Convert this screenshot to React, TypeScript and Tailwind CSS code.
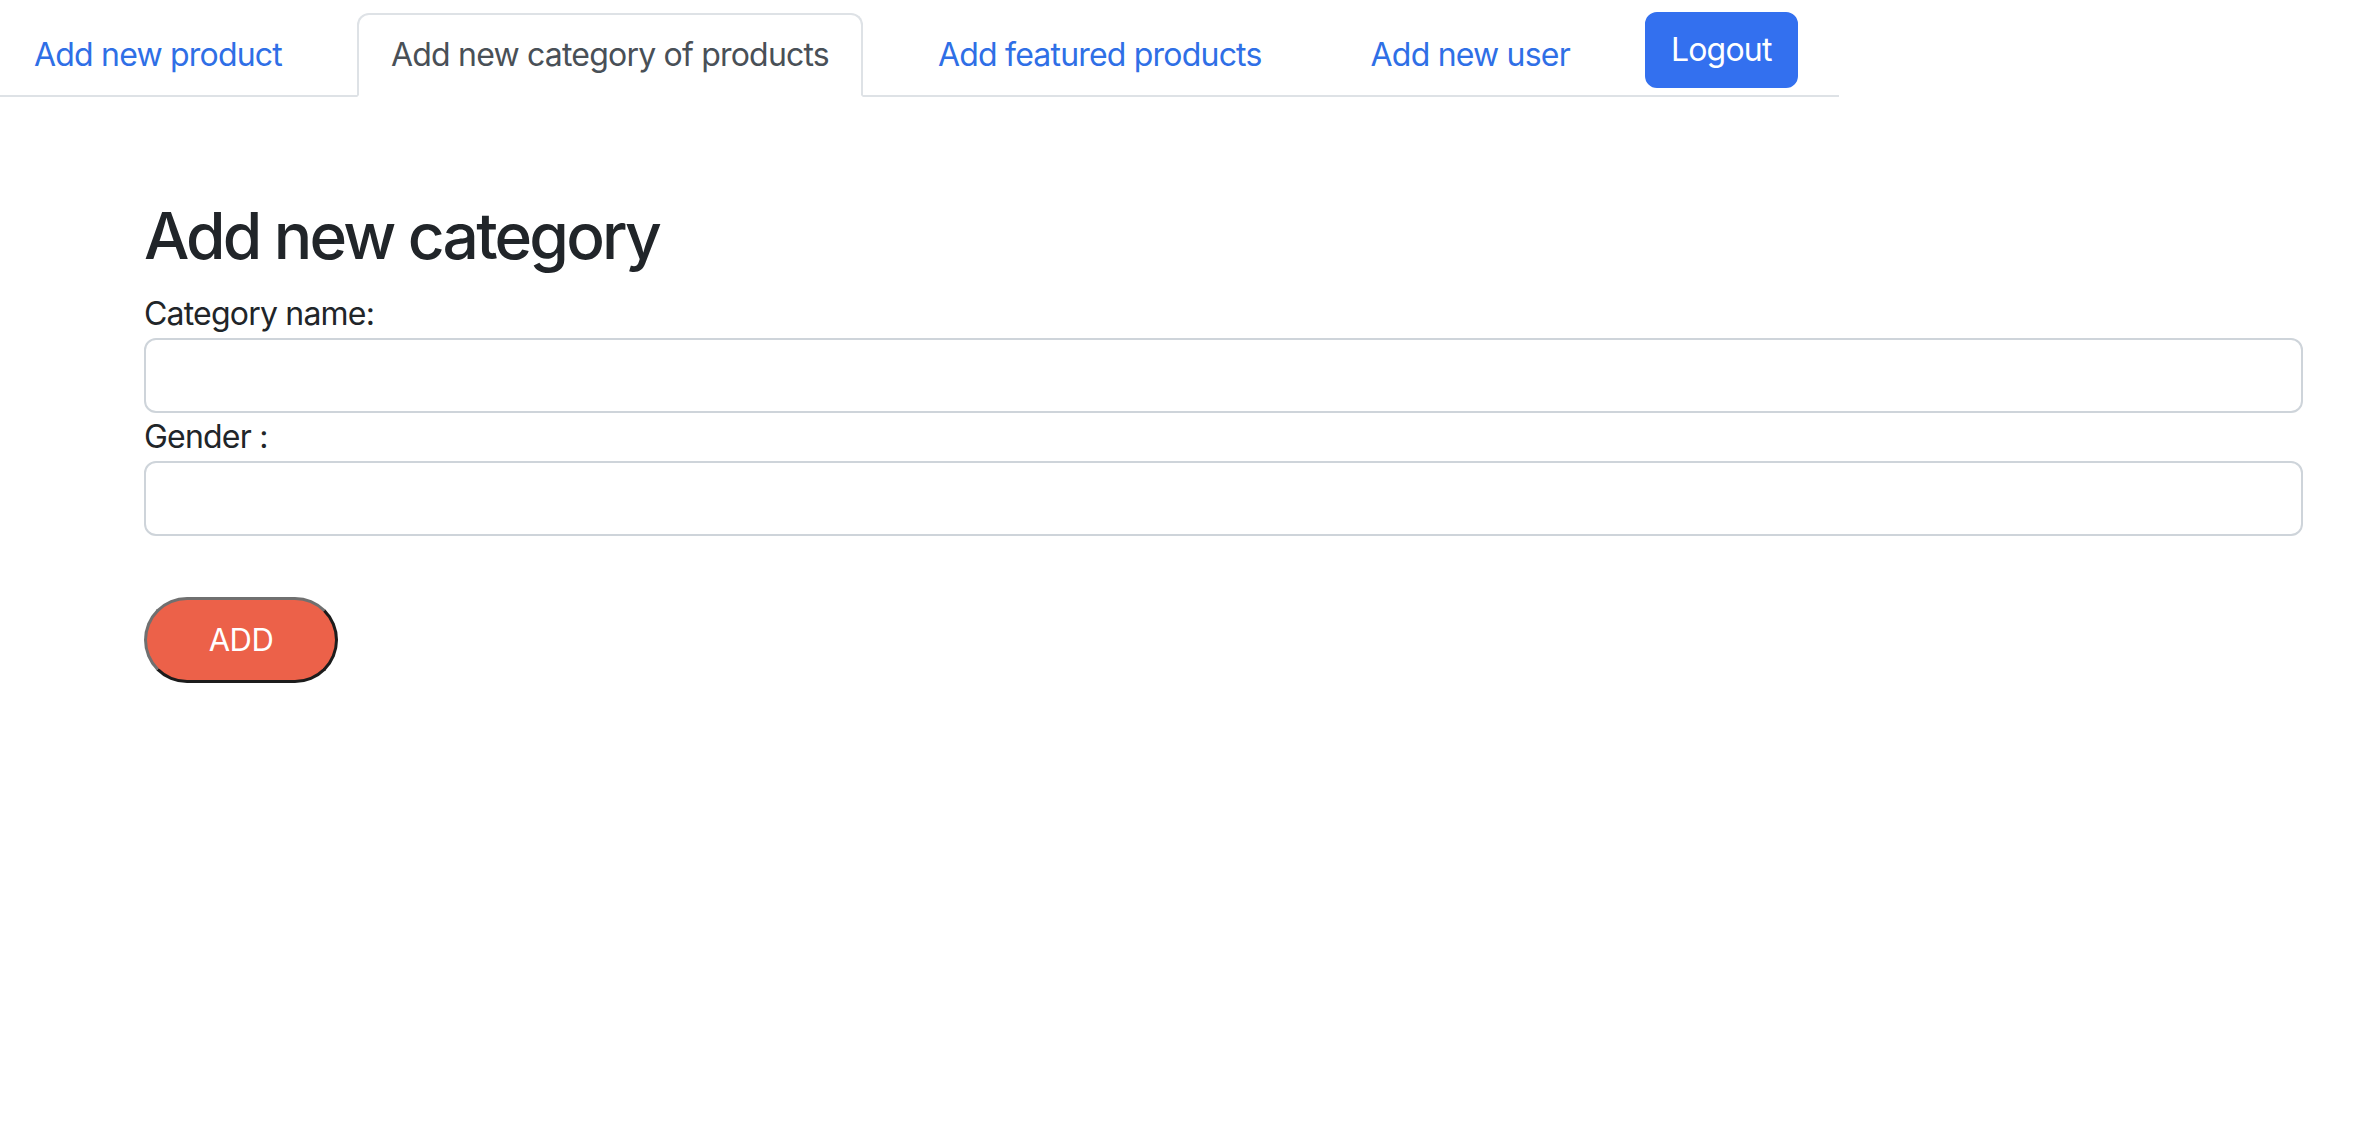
import React from 'react';

const tabs = [
  { name: 'Add new product', active: false },
  { name: 'Add new category of products', active: true },
  { name: 'Add featured products', active: false },
  { name: 'Add new user', active: false },
];

const App: React.FC = () => {
  return (
    <div className="min-h-screen bg-white font-['Inter',sans-serif] text-[#212529] tracking-[-0.8px]">
      {/* Tabs */}
      <ul className="inline-flex items-start mt-[13px] border-b-2 border-[#dee2e6]">
        {tabs.map((tab) => (
          <li key={tab.name} className="mr-[41px] -mb-[2px]">
            <a
              href="#"
              className={`block px-[32px] py-[16px] text-[32px] leading-[48px] border-2 rounded-t-[12px] ${
                tab.active
                  ? 'text-[#495057] bg-white border-[#dee2e6] border-b-white'
                  : 'text-[#2f6fe6] border-transparent'
              }`}
            >
              {tab.name}
            </a>
          </li>
        ))}
        <li className="mr-[41px] -mt-[1px]">
          <button className="px-[24px] py-[12px] text-[32px] leading-[48px] text-white bg-[#3370ef] border-2 border-[#3370ef] rounded-[12px]">
            Logout
          </button>
        </li>
      </ul>

      {/* Form */}
      <div className="pl-[144px] pr-[55px] pt-[100px]">
        <h2 className="text-[64px] leading-[77px] font-medium tracking-[-2.8px] mb-[16px]">Add new category</h2>
        <form className="flex flex-col items-start">
          <label className="text-[32px] leading-[48px]">Category name:</label>
          <input
            type="text"
            className="w-full h-[75px] border-2 border-[#ced4da] rounded-[12px] px-[24px] text-[32px] outline-none"
          />
          <label className="text-[32px] leading-[48px]">Gender :</label>
          <input
            type="text"
            className="w-full h-[75px] border-2 border-[#ced4da] rounded-[12px] px-[24px] text-[32px] outline-none"
          />
          <button
            type="button"
            className="mt-[61px] w-[194px] h-[86px] rounded-full bg-[#ec6149] text-white text-[31px] tracking-[-0.5px] border-[3px] border-t-[#707070] border-l-[#707070] border-r-[#1c1c1c] border-b-[#1c1c1c]"
          >
            ADD
          </button>
        </form>
      </div>
    </div>
  );
};

export default App;
